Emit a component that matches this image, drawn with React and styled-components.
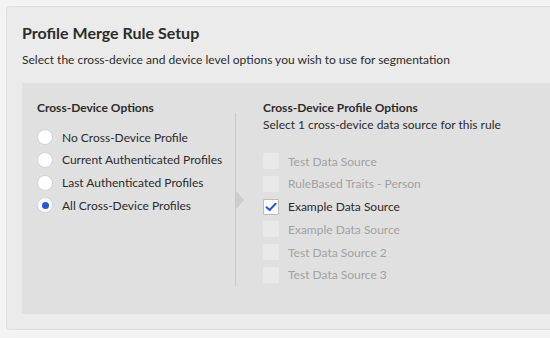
import React from "react";
import styled, { createGlobalStyle } from "styled-components";

const GlobalStyle = createGlobalStyle`
html, body {
  margin: 0;
  padding: 0;
  background: #f3f3f3;
  overflow: hidden;
}
body {
  font-family: Lato, "Noto Sans", sans-serif;
  color: #2c2c2c;
}
`;

const Page = styled.div`
width: 550px;
height: 338px;
padding: 6px 0 0 6px;
box-sizing: border-box;
overflow: hidden;
`;

const Card = styled.section`
width: 600px;
height: 324px;
box-sizing: border-box;
background: #ebebeb;
border: 1px solid #dedede;
border-radius: 4px;
padding: 16px 0 15px 15px;
display: flex;
flex-direction: column;
`;

const Title = styled.h1`
margin: 0;
font-size: 16px;
font-weight: 700;
line-height: 20px;
color: #2c2c2c;
`;

const Subtitle = styled.p`
margin: 8px 0 0;
font-size: 12px;
line-height: 18px;
color: #2c2c2c;
`;

const Panel = styled.div`
margin-top: 14px;
flex: 1;
background: #e0e0e0;
display: flex;
padding: 16px 0 0 15px;
`;

const Column = styled.div`
display: flex;
flex-direction: column;
width: ${p => p.$width || "auto"};
margin-left: ${p => p.$offset || "0"};
`;

const Heading = styled.h2`
margin: 0;
font-size: 12px;
font-weight: 700;
line-height: 17px;
color: #2c2c2c;
`;

const Hint = styled.div`
font-size: 12px;
line-height: 17px;
color: #2c2c2c;
`;

const List = styled.div`
display: flex;
flex-direction: column;
gap: ${p => p.$gap};
margin-top: ${p => p.$top};
`;

const Option = styled.label`
display: flex;
align-items: center;
gap: 9px;
height: 16px;
font-size: 12px;
color: ${p => (p.$disabled ? "#a2a2a2" : "#2c2c2c")};
`;

const Radio = styled.span`
width: 16px;
height: 16px;
box-sizing: border-box;
border-radius: 50%;
background: #fff;
border: 1px solid #d4d4d4;
display: flex;
align-items: center;
justify-content: center;
&::after {
  content: "";
  width: 7px;
  height: 7px;
  border-radius: 50%;
  background: ${p => (p.$checked ? "#2457d1" : "transparent")};
}
`;

const Box = styled.span`
width: 16px;
height: 16px;
box-sizing: border-box;
border-radius: 1px;
background: ${p => (p.$checked ? "#fff" : "#e9e9e9")};
border: 1px solid ${p => (p.$checked ? "#bcbcbc" : "#e9e9e9")};
display: flex;
align-items: center;
justify-content: center;
`;

const Divider = styled.div`
position: relative;
width: 1px;
height: 173px;
margin-top: 14px;
background: #c9c9c9;
`;

const Arrow = styled.div`
position: absolute;
left: 1px;
top: 78px;
width: 0;
height: 0;
border-top: 9px solid transparent;
border-bottom: 9px solid transparent;
border-left: 8px solid #cdcdcd;
`;

const radios = [
  "No Cross-Device Profile",
  "Current Authenticated Profiles",
  "Last Authenticated Profiles",
  "All Cross-Device Profiles",
];

const sources = [
  { name: "Test Data Source" },
  { name: "RuleBased Traits - Person" },
  { name: "Example Data Source", checked: true },
  { name: "Example Data Source" },
  { name: "Test Data Source 2" },
  { name: "Test Data Source 3" },
];

const Check = () => (
  <svg width="12" height="10" viewBox="0 0 12 10">
    <path d="M1.5 5.2 L4.6 8 L10.6 1.8" fill="none" stroke="#2457d1" strokeWidth="2" strokeLinecap="round" strokeLinejoin="round" />
  </svg>
);

const App = () => {
  return (
    <Page>
      <GlobalStyle />
      <Card>
        <Title>Profile Merge Rule Setup</Title>
        <Subtitle>Select the cross-device and device level options you wish to use for segmentation</Subtitle>
        <Panel>
          <Column $width="198px">
            <Heading>Cross-Device Options</Heading>
            <List $gap="6.8px" $top="13px">
              {radios.map((r, i) => (
                <Option key={r}>
                  <Radio $checked={i === 3} />
                  {r}
                </Option>
              ))}
            </List>
          </Column>
          <Divider>
            <Arrow />
          </Divider>
          <Column $offset="27px">
            <Heading>Cross-Device Profile Options</Heading>
            <Hint>Select 1 cross-device data source for this rule</Hint>
            <List $gap="6.8px" $top="20px">
              {sources.map((s, i) => (
                <Option key={i} $disabled={!s.checked}>
                  <Box $checked={s.checked}>{s.checked && <Check />}</Box>
                  {s.name}
                </Option>
              ))}
            </List>
          </Column>
        </Panel>
      </Card>
    </Page>
  );
};

export default App;
